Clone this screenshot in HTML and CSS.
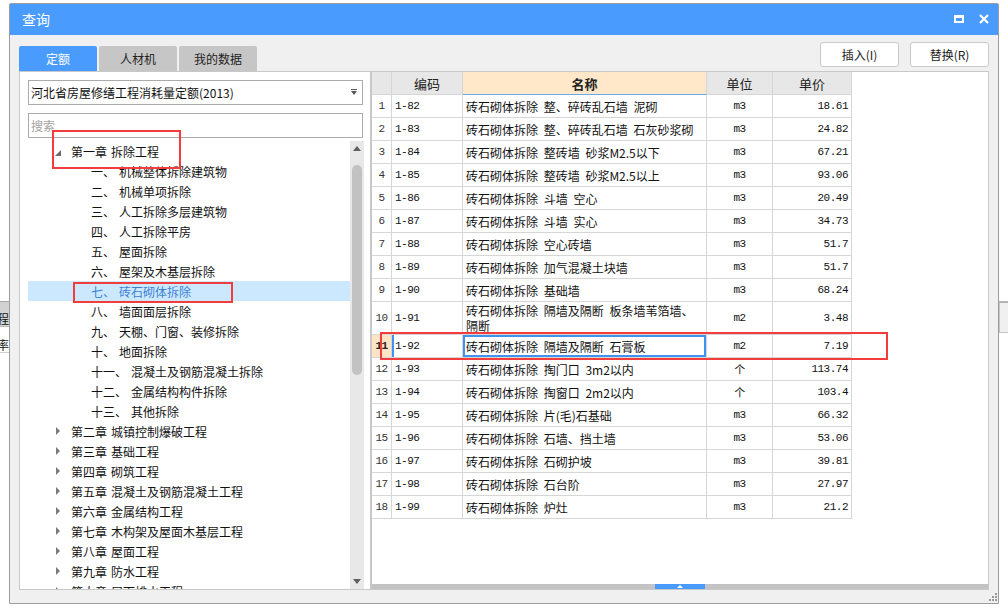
FILE: index.html
```html
<!DOCTYPE html>
<html lang="zh">
<head>
<meta charset="utf-8">
<title>查询</title>
<link rel="stylesheet" href="styles.css">
</head>
<body>
<div class="bg-left">
  <div class="bgl-bar"><span class="bgl-t1">工程量</span></div>
  <div class="bgl-row"><span class="bgl-t2">率</span></div>
</div>
<div class="bg-right"></div>

<div class="dialog">
  <div class="titlebar">
    <span class="title">查询</span>
    <div class="win-btns">
      <span class="ico-max"></span>
      <svg class="ico-close" width="10" height="10" viewBox="0 0 10 10"><path d="M1 1L9 9M9 1L1 9" stroke="#fff" stroke-width="2.2" fill="none"/></svg>
    </div>
  </div>
  <div class="body">
    <div class="toprow">
      <div class="tabs">
        <div class="tab active">定额</div>
        <div class="tab">人材机</div>
        <div class="tab">我的数据</div>
      </div>
      <div class="btns">
        <div class="btn">插入(I)</div>
        <div class="btn">替换(R)</div>
      </div>
    </div>
    <div class="content">
      <div class="left">
        <div class="combo"><span>河北省房屋修缮工程消耗量定额(2013)</span><span class="caret"></span></div>
        <div class="search">搜索</div>
        <div class="tree-wrap">
          <div class="tree">
            <div class="trow chap"><span class="arr"><i class="tri-open"></i></span><span>第一章</span><span>拆除工程</span></div>
            <div class="trow sub"><span>一、</span><span>机械整体拆除建筑物</span></div>
            <div class="trow sub"><span>二、</span><span>机械单项拆除</span></div>
            <div class="trow sub"><span>三、</span><span>人工拆除多层建筑物</span></div>
            <div class="trow sub"><span>四、</span><span>人工拆除平房</span></div>
            <div class="trow sub"><span>五、</span><span>屋面拆除</span></div>
            <div class="trow sub"><span>六、</span><span>屋架及木基层拆除</span></div>
            <div class="trow sub sel"><span>七、</span><span>砖石砌体拆除</span></div>
            <div class="trow sub"><span>八、</span><span>墙面面层拆除</span></div>
            <div class="trow sub"><span>九、</span><span>天棚、门窗、装修拆除</span></div>
            <div class="trow sub"><span>十、</span><span>地面拆除</span></div>
            <div class="trow sub"><span>十一、</span><span>混凝土及钢筋混凝土拆除</span></div>
            <div class="trow sub"><span>十二、</span><span>金属结构构件拆除</span></div>
            <div class="trow sub"><span>十三、</span><span>其他拆除</span></div>
            <div class="trow chap"><span class="arr"><i class="tri-closed"></i></span><span>第二章</span><span>城镇控制爆破工程</span></div>
            <div class="trow chap"><span class="arr"><i class="tri-closed"></i></span><span>第三章</span><span>基础工程</span></div>
            <div class="trow chap"><span class="arr"><i class="tri-closed"></i></span><span>第四章</span><span>砌筑工程</span></div>
            <div class="trow chap"><span class="arr"><i class="tri-closed"></i></span><span>第五章</span><span>混凝土及钢筋混凝土工程</span></div>
            <div class="trow chap"><span class="arr"><i class="tri-closed"></i></span><span>第六章</span><span>金属结构工程</span></div>
            <div class="trow chap"><span class="arr"><i class="tri-closed"></i></span><span>第七章</span><span>木构架及屋面木基层工程</span></div>
            <div class="trow chap"><span class="arr"><i class="tri-closed"></i></span><span>第八章</span><span>屋面工程</span></div>
            <div class="trow chap"><span class="arr"><i class="tri-closed"></i></span><span>第九章</span><span>防水工程</span></div>
            <div class="trow chap"><span class="arr"><i class="tri-closed"></i></span><span>第十章</span><span>屋面排水工程</span></div>
          </div>
          <div class="vscroll">
            <span class="vs-up"></span>
            <span class="vs-thumb"></span>
            <span class="vs-down"></span>
          </div>
        </div>
      </div>
      <div class="right">
        <div class="grid">
          <div class="c h rn"></div><div class="c h">编码</div><div class="c h hname">名称</div><div class="c h">单位</div><div class="c h">单价</div>

          <div class="c rn">1</div><div class="c code">1-82</div><div class="c name">砖石砌体拆除 整、碎砖乱石墙 泥砌</div><div class="c unit">m3</div><div class="c price">18.61</div>
          <div class="c rn">2</div><div class="c code">1-83</div><div class="c name">砖石砌体拆除 整、碎砖乱石墙 石灰砂浆砌</div><div class="c unit">m3</div><div class="c price">24.82</div>
          <div class="c rn">3</div><div class="c code">1-84</div><div class="c name">砖石砌体拆除 整砖墙 砂浆M2.5以下</div><div class="c unit">m3</div><div class="c price">67.21</div>
          <div class="c rn">4</div><div class="c code">1-85</div><div class="c name">砖石砌体拆除 整砖墙 砂浆M2.5以上</div><div class="c unit">m3</div><div class="c price">93.06</div>
          <div class="c rn">5</div><div class="c code">1-86</div><div class="c name">砖石砌体拆除 斗墙 空心</div><div class="c unit">m3</div><div class="c price">20.49</div>
          <div class="c rn">6</div><div class="c code">1-87</div><div class="c name">砖石砌体拆除 斗墙 实心</div><div class="c unit">m3</div><div class="c price">34.73</div>
          <div class="c rn">7</div><div class="c code">1-88</div><div class="c name">砖石砌体拆除 空心砖墙</div><div class="c unit">m3</div><div class="c price">51.7</div>
          <div class="c rn">8</div><div class="c code">1-89</div><div class="c name">砖石砌体拆除 加气混凝土块墙</div><div class="c unit">m3</div><div class="c price">51.7</div>
          <div class="c rn">9</div><div class="c code">1-90</div><div class="c name">砖石砌体拆除 基础墙</div><div class="c unit">m3</div><div class="c price">68.24</div>
          <div class="c rn">10</div><div class="c code">1-91</div><div class="c name tall">砖石砌体拆除 隔墙及隔断 板条墙苇箔墙、<br>隔断</div><div class="c unit">m2</div><div class="c price">3.48</div>
          <div class="c rn cur">11</div><div class="c code curcode">1-92</div><div class="c name curcell">砖石砌体拆除 隔墙及隔断 石膏板</div><div class="c unit">m2</div><div class="c price">7.19</div>
          <div class="c rn">12</div><div class="c code">1-93</div><div class="c name">砖石砌体拆除 掏门口 3m2以内</div><div class="c unit">个</div><div class="c price">113.74</div>
          <div class="c rn">13</div><div class="c code">1-94</div><div class="c name">砖石砌体拆除 掏窗口 2m2以内</div><div class="c unit">个</div><div class="c price">103.4</div>
          <div class="c rn">14</div><div class="c code">1-95</div><div class="c name">砖石砌体拆除 片(毛)石基础</div><div class="c unit">m3</div><div class="c price">66.32</div>
          <div class="c rn">15</div><div class="c code">1-96</div><div class="c name">砖石砌体拆除 石墙、挡土墙</div><div class="c unit">m3</div><div class="c price">53.06</div>
          <div class="c rn">16</div><div class="c code">1-97</div><div class="c name">砖石砌体拆除 石砌护坡</div><div class="c unit">m3</div><div class="c price">39.81</div>
          <div class="c rn">17</div><div class="c code">1-98</div><div class="c name">砖石砌体拆除 石台阶</div><div class="c unit">m3</div><div class="c price">27.97</div>
          <div class="c rn">18</div><div class="c code">1-99</div><div class="c name">砖石砌体拆除 炉灶</div><div class="c unit">m3</div><div class="c price">21.2</div>
        </div>
        <div class="hscroll"><span class="hs-thumb"></span></div>
      </div>
    </div>
  </div>
  <svg class="grip" width="8" height="8" viewBox="0 0 8 8"><g fill="#9a9a9a"><rect x="6" y="0" width="2" height="2"/><rect x="3" y="3" width="2" height="2"/><rect x="6" y="3" width="2" height="2"/><rect x="0" y="6" width="2" height="2"/><rect x="3" y="6" width="2" height="2"/><rect x="6" y="6" width="2" height="2"/></g></svg>
</div>

<div class="redbox rb1"></div>
<div class="redbox rb2"></div>
<div class="redbox rb3"></div>
</body>
</html>
```
FILE: styles.css
```css
html, body {
  margin: 0;
  padding: 0;
}
body {
  width: 1008px;
  height: 610px;
  position: relative;
  overflow: hidden;
  background: #ffffff;
  font-family: "Noto Sans CJK SC", "Noto Sans", sans-serif;
  font-size: 12px;
  color: #111;
}

/* background application fragments */
.bg-left {
  position: absolute;
  left: 0;
  top: 301px;
  width: 9px;
  overflow: hidden;
  border-top: 1px solid #a9a9a9;
}
.bgl-bar {
  height: 24px;
  background: #d2d2d2;
  display: flex;
  align-items: flex-end;
  white-space: nowrap;
}
.bgl-t1 { margin-left: -15px; line-height: 14px; }
.bgl-row {
  height: 25px;
  border-top: 1px solid #bdbdbd;
  border-bottom: 1px solid #cfcfcf;
  display: flex;
  align-items: center;
  white-space: nowrap;
}
.bgl-t2 { margin-left: -3px; margin-top: 10px; }
.bg-right {
  position: absolute;
  left: 999px;
  top: 301px;
  width: 9px;
  height: 29px;
  background: #f0f0f0;
  border-top: 2px solid #b4b4b4;
  border-bottom: 1px solid #c4c4c4;
  border-left: 1px solid #c4c4c4;
}

/* dialog */
.dialog {
  position: absolute;
  left: 9px;
  top: 3px;
  width: 990px;
  height: 601px;
  box-sizing: border-box;
  border: 1px solid #9c9c9c;
  border-radius: 2px 2px 0 0;
  background: #f0f0f0;
  display: flex;
  flex-direction: column;
}
.titlebar {
  height: 31px;
  flex: none;
  background: #4a9bfe;
  color: #fff;
  display: flex;
  align-items: center;
  padding: 0 9px 0 12px;
}
.title {
  font-size: 14px;
  line-height: 16px;
  margin-top: -1px;
}
.win-btns {
  margin-left: auto;
  display: flex;
  align-items: center;
  gap: 15px;
  margin-top: -1px;
}
.ico-max {
  display: block;
  width: 10px;
  height: 8px;
  box-sizing: border-box;
  border: 2px solid #fff;
  border-top-width: 3px;
}
.ico-close { display: block; }

.body {
  flex: 1;
  display: flex;
  flex-direction: column;
  padding: 7px 9px 0 9px;
}
.toprow {
  height: 29px;
  display: flex;
  flex: none;
}
.tabs {
  display: flex;
  gap: 2px;
  align-self: flex-end;
}
.tab {
  width: 78px;
  height: 25px;
  background: #c6c6c6;
  color: #222;
  border-radius: 2px 2px 0 0;
  display: flex;
  align-items: center;
  justify-content: center;
  font-size: 12px;
}
.tab.active {
  background: #4a9bfe;
  color: #fff;
}
.btns {
  margin-left: auto;
  display: flex;
  gap: 11px;
  align-self: flex-start;
}
.btn {
  width: 79px;
  height: 25px;
  box-sizing: border-box;
  background: #fff;
  border: 1px solid #c9c9c9;
  border-radius: 3px;
  display: flex;
  align-items: center;
  justify-content: center;
  color: #222;
}

.content {
  height: 519px;
  display: flex;
  flex: none;
}
.left {
  width: 352px;
  box-sizing: border-box;
  border: 1px solid #c8c8c8;
  background: #fff;
  padding: 8px 6px 0 8px;
  display: flex;
  flex-direction: column;
}
.combo, .search {
  width: 335px;
  height: 25px;
  box-sizing: border-box;
  border: 1px solid #ababab;
  display: flex;
  align-items: center;
  padding-left: 2px;
  flex: none;
}
.caret {
  margin-left: auto;
  margin-right: 5px;
  width: 0;
  height: 0;
  border-left: 3px solid transparent;
  border-right: 3px solid transparent;
  border-top: 4px solid #555;
  position: relative;
}
.caret::before {
  content: "";
  position: absolute;
  left: -3px;
  top: -6px;
  width: 6px;
  height: 1px;
  background: #555;
}
.search {
  margin-top: 8px;
  color: #a3a3a3;
}
.tree-wrap {
  margin-top: 3px;
  flex: 1;
  display: flex;
  overflow: hidden;
}
.tree {
  flex: 1;
  overflow: hidden;
}
.trow {
  height: 20px;
  display: flex;
  align-items: center;
  gap: 4px;
  white-space: nowrap;
  color: #111;
}
.trow.chap { padding-left: 27px; }
.trow.sub { padding-left: 63px; }
.trow.sel {
  background: #cce8ff;
  color: #3b82d4;
}
.arr {
  width: 12px;
  height: 20px;
  position: relative;
  flex: none;
}
.tri-open {
  position: absolute;
  left: 0;
  top: 9px;
  width: 0;
  height: 0;
  border-left: 6px solid transparent;
  border-bottom: 6px solid #6a6a6a;
}
.tri-closed {
  position: absolute;
  left: 1px;
  top: 6px;
  width: 0;
  height: 0;
  border-left: 4px solid #7a7a7a;
  border-top: 4px solid transparent;
  border-bottom: 4px solid transparent;
}
.vscroll {
  width: 14px;
  flex: none;
  background: #e8e8e8;
  position: relative;
}
.vs-up, .vs-down {
  position: absolute;
  left: 3px;
  width: 0;
  height: 0;
  border-left: 4px solid transparent;
  border-right: 4px solid transparent;
}
.vs-up {
  top: 5px;
  border-bottom: 5px solid #5e5e5e;
}
.vs-down {
  bottom: 5px;
  border-top: 5px solid #5e5e5e;
}
.vs-thumb {
  position: absolute;
  left: 2px;
  top: 24px;
  width: 10px;
  height: 210px;
  border-radius: 5px;
  background: #c2c2c2;
}

.right {
  flex: 1;
  box-sizing: border-box;
  border: 1px solid #c8c8c8;
  background: #fff;
  display: flex;
  flex-direction: column;
}
.grid {
  display: grid;
  grid-template-columns: 20px 71px 244px 66px 79px;
  grid-template-rows: repeat(10, 23px) 33px;
  grid-auto-rows: 23px;
  width: 480px;
}
.c {
  box-sizing: border-box;
  border-right: 1px solid #d6d6d6;
  border-bottom: 1px solid #d6d6d6;
  display: flex;
  align-items: center;
  white-space: nowrap;
  overflow: hidden;
}
.c.h {
  background: #e7e7e7;
  justify-content: center;
  font-size: 13px;
  color: #222;
}
.c.hname {
  background: #ffe7c9;
  font-weight: bold;
  border-bottom-color: #6aa8ea;
}
.rn, .code, .unit, .price {
  font-family: "Liberation Mono", "Noto Sans CJK SC", monospace;
  font-size: 11px;
  letter-spacing: -0.5px;
}
.rn {
  justify-content: center;
  color: #333;
}
.code { padding-left: 3px; }
.name {
  padding-left: 3px;
  word-spacing: 3px;
}
.unit { justify-content: center; }
.price {
  justify-content: flex-end;
  padding-right: 3px;
}
.name.tall {
  white-space: normal;
  line-height: 15px;
}
.rn.cur {
  background: #fde4c4;
  font-weight: bold;
  color: #222;
}
.curcode { box-shadow: inset 2px 0 0 #3f92ee; }
.curcell { box-shadow: inset 0 0 0 2px #3f92ee; }

.hscroll {
  margin-top: auto;
  height: 5px;
  background: #c3c3c3;
  position: relative;
  flex: none;
}
.hs-thumb {
  position: absolute;
  left: 283px;
  top: 0;
  width: 50px;
  height: 5px;
  background: #4a9bfe;
}
.hs-thumb::after {
  content: "";
  position: absolute;
  left: 22px;
  top: 1px;
  width: 0;
  height: 0;
  border-left: 3px solid transparent;
  border-right: 3px solid transparent;
  border-bottom: 3px solid #fff;
}
.grip {
  position: absolute;
  right: 1px;
  bottom: 2px;
}

/* annotation boxes */
.redbox {
  position: absolute;
  box-sizing: border-box;
  border: 2px solid #f43c3c;
}
.rb1 { left: 52px; top: 130px; width: 129px; height: 39px; }
.rb2 { left: 73px; top: 282px; width: 160px; height: 21px; }
.rb3 { left: 380px; top: 332px; width: 508px; height: 28px; }
```
